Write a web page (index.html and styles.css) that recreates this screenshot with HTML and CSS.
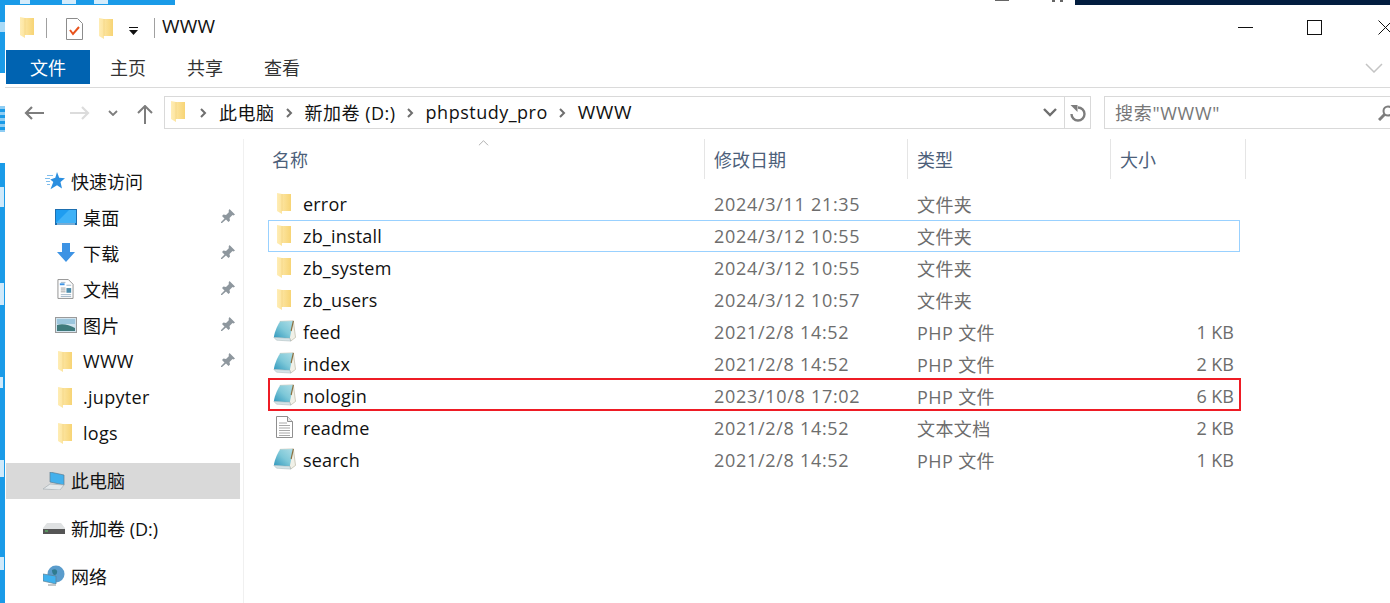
FILE: index.html
```html
<!DOCTYPE html>
<html lang="zh-CN">
<head>
<meta charset="utf-8">
<title>WWW</title>
<link rel="stylesheet" href="styles.css">
</head>
<body>
<svg class="defs" width="0" height="0" aria-hidden="true">
  <defs>
    <linearGradient id="fg" x1="0" y1="0" x2="1" y2="0"><stop offset="0" stop-color="#ffedb5"/><stop offset="1" stop-color="#f7d475"/></linearGradient>
    <linearGradient id="pg" x1="1" y1="0" x2="0" y2="1"><stop offset="0" stop-color="#aedde6"/><stop offset=".5" stop-color="#7ec8d8"/><stop offset="1" stop-color="#2f97bd"/></linearGradient>
    <symbol id="folder" viewBox="0 0 14 21" preserveAspectRatio="none">
      <path d="M0 0l5 1h9v17H5v3l-5-3z" fill="url(#fg)"/>
      <path d="M5 1v17" stroke="#f2d27c" stroke-width=".6" fill="none"/>
    </symbol>
    <symbol id="php" viewBox="0 0 26 24" preserveAspectRatio="none">
      <path d="M8 1.500L23 1l2.500 18-5.500 4-1-3z" fill="#f1f1e8" stroke="#a9a58f" stroke-width=".6"/>
      <path d="M8 1.500L23 1l-4 19L1 19c0-3 3-12 7-17.500z" fill="url(#pg)"/>
      <path d="M23 1l-2.500 11" stroke="#8a6f3e" stroke-width="1.300" fill="none"/>
      <path d="M1 19l18 1 1 3-16-1z" fill="#d5e4e8" stroke="#a0b0b4" stroke-width=".5"/>
    </symbol>
    <symbol id="txt" viewBox="0 0 17 22" preserveAspectRatio="none">
      <path d="M.5.500h11l5 5v16H.5z" fill="#fff" stroke="#8f8f8f"/>
      <path d="M11.500.500v5h5" fill="#e8e8e8" stroke="#8f8f8f"/>
      <path d="M3 7h8M3 9.500h11M3 12h11M3 14.500h11M3 17h11M3 19.500h11" stroke="#a8a8a8" fill="none"/>
    </symbol>
    <symbol id="pin" viewBox="0 0 16 16">
      <path d="M9.500 1l5.500 5.500-1.500 1-1-.5-3 3 .5 2.500-1.500 1.500-2.500-2.500L2 15l-1 0 0-1 3.500-3.500L2 8l1.500-1.500L6 7l3-3-.500-1z" fill="#8e979e"/>
    </symbol>
  </defs>
</svg>

<div class="top-strip">
  <div class="top-blue"><span class="tb b1"></span><span class="tb b2"></span><span class="tb b3"></span></div>
  <div class="top-white"><span class="tw w1"></span><span class="tw w2"></span><span class="tw w3"></span></div>
  <div class="top-navy"></div>
</div>

<div class="stage">
  <div class="left-strip">
    <span class="chip c0"></span><span class="chip gapw g1"></span><span class="chip stripes"></span><span class="chip gapw g2"></span>
    <span class="chip c1"></span><span class="chip c2"></span><span class="chip c3"></span><span class="chip c4"></span><span class="chip c5"></span>
  </div>

  <main class="window">
    <header class="titlebar">
      <svg class="qa-folder"><use href="#folder"/></svg>
      <span class="qa-sep"></span>
      <svg class="qa-check" viewBox="0 0 17 22"><path d="M.5.500h11l5 5v16H.5z" fill="#fff" stroke="#8c8c8c"/><path d="M4 12l3 4 6-7" fill="none" stroke="#e8521c" stroke-width="2"/></svg>
      <svg class="qa-folder2"><use href="#folder"/></svg>
      <svg class="qa-drop" viewBox="0 0 9 8"><path d="M0 0h9v1H0zM0 3h9L4.500 8z" fill="#111"/></svg>
      <span class="qa-sep sep2"></span>
      <span class="title">WWW</span>
      <div class="winbtns">
        <span class="win-min"></span>
        <span class="win-max"></span>
        <svg class="win-close" viewBox="0 0 15 15"><path d="M.5.500l14 14M14.500.500l-14 14" stroke="#111" fill="none"/></svg>
      </div>
    </header>

    <nav class="ribbon">
      <span class="tab active">文件</span>
      <span class="tab t1">主页</span>
      <span class="tab t2">共享</span>
      <span class="tab t3">查看</span>
      <svg class="ribbon-chev" viewBox="0 0 18 10"><path d="M1 1l8 8 8-8" fill="none" stroke="#c4c4c4" stroke-width="1.500"/></svg>
    </nav>

    <div class="addressrow">
      <svg class="nav-btn back" viewBox="0 0 20 14"><path d="M8 1L2 7l6 6M2 7h18" fill="none" stroke="#7d7d7d" stroke-width="2.200"/></svg>
      <svg class="nav-btn fwd" viewBox="0 0 20 14"><path d="M12 1l6 6-6 6M18 7H0" fill="none" stroke="#dcdcdc" stroke-width="2.200"/></svg>
      <svg class="nav-drop" viewBox="0 0 10 6"><path d="M1 1l4 4 4-4" fill="none" stroke="#7d7d7d" stroke-width="1.800"/></svg>
      <svg class="nav-up" viewBox="0 0 16 19"><path d="M1 8l7-7 7 7M8 1v18" fill="none" stroke="#7d7d7d" stroke-width="2"/></svg>
      <div class="addressbar">
        <svg class="ab-folder"><use href="#folder"/></svg>
        <svg class="crumb-chev" viewBox="0 0 7 10"><path d="M1 1l4 4-4 4" fill="none" stroke="#6e6e6e" stroke-width="2"/></svg>
        <span class="crumb">此电脑</span>
        <svg class="crumb-chev" viewBox="0 0 7 10"><path d="M1 1l4 4-4 4" fill="none" stroke="#6e6e6e" stroke-width="2"/></svg>
        <span class="crumb">新加卷 (D:)</span>
        <svg class="crumb-chev" viewBox="0 0 7 10"><path d="M1 1l4 4-4 4" fill="none" stroke="#6e6e6e" stroke-width="2"/></svg>
        <span class="crumb">phpstudy_pro</span>
        <svg class="crumb-chev" viewBox="0 0 7 10"><path d="M1 1l4 4-4 4" fill="none" stroke="#6e6e6e" stroke-width="2"/></svg>
        <span class="crumb crumb-www">WWW</span>
        <svg class="ab-drop" viewBox="0 0 14 9"><path d="M1 1l6 6 6-6" fill="none" stroke="#6e6e6e" stroke-width="2.400"/></svg>
        <span class="ab-refresh">
          <svg viewBox="0 0 18 18"><path d="M9 3.500A6.500 6.500 0 1 1 2.500 10" fill="none" stroke="#7d7d7d" stroke-width="2.400"/><path d="M1.500 1h7v7z" fill="#7d7d7d"/></svg>
        </span>
      </div>
      <div class="searchbox">
        <span class="search-text">搜索"WWW"</span>
        <svg class="search-icon" viewBox="0 0 16 16"><circle cx="10" cy="6" r="4.500" fill="none" stroke="#7d7d7d" stroke-width="2"/><path d="M7 9l-6 6" stroke="#7d7d7d" stroke-width="3"/></svg>
      </div>
    </div>

    <div class="content">
      <aside class="sidebar">
        <div class="side-row head">
          <svg class="side-ico star" viewBox="0 0 20 18"><path d="M12 0l2.200 5.800 5.800.4-4.500 3.800 1.500 6.500-5-3.300-6.500 4 2.800-7.200-3-2.600 5-1.700z" fill="#2b8fe0"/><path d="M2 3.500h6M0 6.500h5M1 9.500h4M2 12.500h3" stroke="#7fbdec"/></svg>
          <span>快速访问</span>
        </div>
        <div class="side-row sub">
          <svg class="side-ico desk" viewBox="0 0 22 16"><rect width="22" height="16" fill="#1d6fb0"/><path d="M1 1h20v13H1z" fill="#1f9df0"/><path d="M1 14L14 1h7v13z" fill="#3fb2f7"/><path d="M2 15h18" stroke="#cfe9fa"/></svg>
          <span>桌面</span><svg class="pin"><use href="#pin"/></svg>
        </div>
        <div class="side-row sub">
          <svg class="side-ico down" viewBox="0 0 18 20"><path d="M5 0h8v9h5l-9 10L0 9h5z" fill="#3d93e4"/></svg>
          <span>下载</span><svg class="pin"><use href="#pin"/></svg>
        </div>
        <div class="side-row sub">
          <svg class="side-ico doc" viewBox="0 0 18 22"><path d="M1 1h11l5 5v15H1z" fill="#fff" stroke="#8f8f8f"/><path d="M4 4h5M10 7h5M4 17h11M4 19h11" stroke="#9fb4c6"/><path d="M10 10h5v5h-5z" fill="#4b8cab"/><path d="M4 10h5M4 12h5M4 14h5" stroke="#a0a0a0"/><path d="M3 6h5" stroke="#3d93e4" stroke-width="2"/></svg>
          <span>文档</span><svg class="pin"><use href="#pin"/></svg>
        </div>
        <div class="side-row sub">
          <svg class="side-ico pic" viewBox="0 0 22 16"><rect x=".5" y=".5" width="21" height="15" fill="#d0e3ee" stroke="#9a9a9a"/><path d="M2 2h18v5H2z" fill="#9cc6dd"/><path d="M2 8c6-2 12 0 18 3v3H2z" fill="#3f7a7c"/></svg>
          <span>图片</span><svg class="pin"><use href="#pin"/></svg>
        </div>
        <div class="side-row sub">
          <svg class="side-ico fold"><use href="#folder"/></svg>
          <span>WWW</span><svg class="pin"><use href="#pin"/></svg>
        </div>
        <div class="side-row sub">
          <svg class="side-ico fold"><use href="#folder"/></svg>
          <span>.jupyter</span>
        </div>
        <div class="side-row sub">
          <svg class="side-ico fold"><use href="#folder"/></svg>
          <span>logs</span>
        </div>
        <div class="side-row head selected gap-a">
          <svg class="side-ico pc" viewBox="0 0 22 18"><path d="M7 0l14 3v10L7 10z" fill="#43b0ec" stroke="#5e7f93" stroke-width=".7"/><path d="M0 17l7-5 14 1-4 5z" fill="#e4e8ea" stroke="#a8b0b4" stroke-width=".7"/></svg>
          <span>此电脑</span>
        </div>
        <div class="side-row head gap-b">
          <svg class="side-ico drive" viewBox="0 0 22 11"><path d="M4 0h14l4 5v5H0V5z" fill="#dfe1e2"/><path d="M0 6h22v5H0z" fill="#555"/><path d="M2 8h3" stroke="#5fd46a"/></svg>
          <span>新加卷 (D:)</span>
        </div>
        <div class="side-row head gap-c">
          <svg class="side-ico net" viewBox="0 0 22 22"><circle cx="13" cy="9" r="8.500" fill="#5a9ccc"/><path d="M9 5c3-2 6 0 5 3s-5 3-5-3z" fill="#2f7b8f"/><path d="M0 9l13 2v8L0 16z" fill="#3fb1ee" stroke="#60808f" stroke-width=".7"/><path d="M5 19h8v2H5z" fill="#c4c8ca"/></svg>
          <span>网络</span>
        </div>
      </aside>

      <section class="list">
        <svg class="sort-arrow" viewBox="0 0 12 6"><path d="M1 5.500l5-5 5 5" fill="none" stroke="#a8a8a8"/></svg>
        <div class="row-head">
          <span class="col-name">名称</span>
          <span class="col-date">修改日期</span>
          <span class="col-type">类型</span>
          <span class="col-size">大小</span>
        </div>
        <div class="rows">
          <div class="row"><span class="cell-name"><svg class="fico"><use href="#folder"/></svg>error</span><span class="cell-date">2024/3/11 21:35</span><span class="cell-type">文件夹</span><span class="cell-size"></span></div>
          <div class="row focused"><span class="cell-name"><svg class="fico"><use href="#folder"/></svg>zb_install</span><span class="cell-date">2024/3/12 10:55</span><span class="cell-type">文件夹</span><span class="cell-size"></span></div>
          <div class="row"><span class="cell-name"><svg class="fico"><use href="#folder"/></svg>zb_system</span><span class="cell-date">2024/3/12 10:55</span><span class="cell-type">文件夹</span><span class="cell-size"></span></div>
          <div class="row"><span class="cell-name"><svg class="fico"><use href="#folder"/></svg>zb_users</span><span class="cell-date">2024/3/12 10:57</span><span class="cell-type">文件夹</span><span class="cell-size"></span></div>
          <div class="row"><span class="cell-name"><svg class="pico"><use href="#php"/></svg>feed</span><span class="cell-date">2021/2/8 14:52</span><span class="cell-type">PHP 文件</span><span class="cell-size">1 KB</span></div>
          <div class="row"><span class="cell-name"><svg class="pico"><use href="#php"/></svg>index</span><span class="cell-date">2021/2/8 14:52</span><span class="cell-type">PHP 文件</span><span class="cell-size">2 KB</span></div>
          <div class="row marked"><span class="cell-name"><svg class="pico"><use href="#php"/></svg>nologin</span><span class="cell-date">2023/10/8 17:02</span><span class="cell-type">PHP 文件</span><span class="cell-size">6 KB</span></div>
          <div class="row"><span class="cell-name"><svg class="tico"><use href="#txt"/></svg>readme</span><span class="cell-date">2021/2/8 14:52</span><span class="cell-type">文本文档</span><span class="cell-size">2 KB</span></div>
          <div class="row"><span class="cell-name"><svg class="pico"><use href="#php"/></svg>search</span><span class="cell-date">2021/2/8 14:52</span><span class="cell-type">PHP 文件</span><span class="cell-size">1 KB</span></div>
        </div>
      </section>
    </div>
  </main>
</div>
</body>
</html>
```
FILE: styles.css
```css
* { box-sizing: border-box; }
html, body { margin: 0; height: 100%; overflow: hidden; background: #fff; }
body { font-family: "Open Sans", "Noto Sans CJK SC", sans-serif; font-size: 18px; color: #111; }
.defs { position: absolute; }

.top-strip { display: flex; height: 5px; position: relative; }
.top-blue { width: 175px; background: #1a9be8; position: relative; }
.top-white { flex: 1; background: #fff; position: relative; }
.top-navy { width: 315px; background: #021d3f; }
.tb { position: absolute; top: 0; height: 4px; background: #d5ecfb; }
.b1 { left: 20px; width: 10px; }
.b2 { left: 62px; width: 14px; }
.b3 { left: 94px; width: 14px; }
.tw { position: absolute; top: 0; height: 1px; background: #666; }
.w1 { left: 820px; width: 14px; }
.w2 { left: 877px; width: 3px; height: 2px; }
.w3 { left: 885px; width: 3px; height: 2px; }

.stage { display: flex; height: 598px; }
.left-strip { position: relative; width: 5px; background: #1a9be8; flex: none; }
.chip { position: absolute; left: 0; width: 5px; background: #cfe9fa; }
.c0 { top: 17px; height: 10px; background: #a9daf7; }
.gapw { background: #fff; }
.g1 { top: 68px; height: 33px; }
.stripes { top: 101px; height: 26px; background: repeating-linear-gradient(#8fcdf3 0 3px, #1a9be8 3px 6px); }
.g2 { top: 127px; height: 31px; }
.c1 { top: 182px; height: 20px; width: 4px; }
.c2 { top: 278px; height: 22px; width: 4px; }
.c3 { top: 372px; height: 11px; width: 3px; }
.c4 { top: 455px; height: 17px; width: 4px; }
.c5 { top: 552px; height: 13px; width: 4px; }

.window { flex: 1; display: flex; flex-direction: column; min-width: 0; background: #fff; overflow: hidden; }

.titlebar { height: 45px; display: flex; align-items: center; padding-left: 15px; }
.qa-folder { width: 14px; height: 21px; margin-right: 12px; flex: none; }
.qa-sep { width: 1px; height: 20px; background: #a0a0a0; margin-right: 19px; flex: none; }
.qa-check { width: 17px; height: 22px; margin-right: 16px; flex: none; margin-top: 2px; }
.qa-folder2 { width: 14px; height: 21px; margin-right: 16px; flex: none; margin-top: 2px; }
.qa-drop { width: 9px; height: 8px; margin-right: 16px; margin-top: 6px; flex: none; }
.sep2 { margin-right: 7px; }
.title { font-size: 19px; margin-bottom: 3px; letter-spacing: .2px; }
.winbtns { margin-left: auto; display: flex; align-items: center; height: 100%; flex: none; }
.win-min { width: 15px; height: 1px; background: #111; }
.win-max { width: 15px; height: 15px; border: 1px solid #111; margin-left: 54px; }
.win-close { width: 15px; height: 15px; margin-left: 56px; margin-right: -3px; flex: none; }

.ribbon { height: 38px; display: flex; align-items: flex-start; border-bottom: 1px solid #dadada; padding-left: 1px; }
.tab { font-size: 18px; line-height: 37px; height: 34px; color: #333; flex: none; }
.tab.active { width: 84px; text-align: center; background: #0063b1; color: #fff; }
.t1 { margin-left: 20px; }
.t2 { margin-left: 41px; }
.t3 { margin-left: 41px; }
.ribbon-chev { width: 18px; height: 10px; margin-left: auto; margin-right: 7px; margin-top: 13px; }

.addressrow { height: 51px; padding-top: 8px; display: flex; align-items: flex-start; }
.nav-btn { width: 20px; height: 14px; margin-top: 10px; flex: none; }
.back { margin-left: 19px; }
.fwd { margin-left: 26px; }
.nav-drop { width: 10px; height: 6px; margin: 14px 0 0 18px; flex: none; }
.nav-up { width: 16px; height: 19px; margin: 9px 0 0 19px; flex: none; }
.addressbar { width: 927px; height: 33px; margin-left: 11px; border: 1px solid #d9d9d9; display: flex; align-items: center; font-size: 18px; flex: none; }
.ab-folder { width: 14px; height: 21px; margin-left: 6px; margin-right: 4px; margin-top: -2px; flex: none; }
.crumb-chev { width: 7px; height: 10px; margin: 0 12px 0 11px; flex: none; }
.crumb { white-space: nowrap; color: #111; letter-spacing: .5px; margin-bottom: 2px; }
.crumb-www { font-size: 19px; letter-spacing: .5px; }
.ab-drop { width: 14px; height: 9px; margin-left: auto; margin-right: 7px; flex: none; }
.ab-refresh { width: 26px; height: 100%; border-left: 1px solid #d9d9d9; display: flex; align-items: center; justify-content: center; flex: none; }
.ab-refresh svg { width: 18px; height: 18px; }
.searchbox { flex: none; width: 300px; height: 33px; margin-left: 13px; border: 1px solid #d9d9d9; display: flex; align-items: center; padding-left: 10px; position: relative; }
.search-text { font-size: 18px; color: #777; letter-spacing: .7px; margin-bottom: 2px; }
.search-icon { width: 16px; height: 16px; position: absolute; left: 273px; top: 8px; }

.content { flex: 1; display: flex; min-height: 0; }
.sidebar { width: 239px; flex: none; border-right: 1px solid #f0f0f0; padding-top: 24px; }
.side-row { height: 36px; display: flex; align-items: center; position: relative; color: #111; font-size: 18px; }
.head { padding-left: 38px; }
.sub { padding-left: 50px; }
.head span { margin-left: 1px; }
.sub span { position: absolute; left: 78px; letter-spacing: .3px; }
.side-ico { flex: none; }
.star { width: 20px; height: 18px; margin-right: 5px; margin-left: 2px; }
.desk { width: 22px; height: 16px; }
.down { width: 18px; height: 20px; margin-left: 2px; }
.doc { width: 17px; height: 22px; margin-left: 2px; }
.pic { width: 22px; height: 16px; }
.fold { width: 14px; height: 21px; margin-left: 3px; }
.pin { position: absolute; left: 215px; width: 16px; height: 16px; top: 9px; }
.selected { background: #d9d9d9; width: 234px; margin-left: 1px; padding-left: 37px; }
.selected span { margin-bottom: 2px; }
.pc { width: 22px; height: 18px; margin-right: 5px; }
.drive { width: 22px; height: 11px; margin-right: 5px; }
.net { width: 22px; height: 22px; margin-right: 5px; }
.gap-a { margin-top: 12px; }
.gap-b { margin-top: 11px; }
.gap-c { margin-top: 12px; }

.list { flex: 1; position: relative; min-width: 0; }
.sort-arrow { position: absolute; left: 234px; top: 1px; width: 11px; height: 6px; }
.row-head { display: flex; height: 40px; color: #4c607a; font-size: 18px; }
.row-head span { height: 100%; display: flex; align-items: center; border-right: 1px solid #e5e5e5; flex: none; }
.col-name { width: 461px; padding-left: 28px; }
.col-date { width: 203px; padding-left: 9px; }
.col-type { width: 203px; padding-left: 9px; }
.col-size { width: 135px; padding-left: 9px; }
.rows { padding-top: 9px; padding-left: 24px; }
.row { display: flex; height: 32px; align-items: center; width: 972px; }
.cell-name { width: 436px; display: flex; align-items: center; flex: none; white-space: nowrap; letter-spacing: .2px; }
.cell-date { width: 203px; color: #6d6d6d; flex: none; padding-left: 10px; letter-spacing: .7px; }
.cell-type { width: 203px; color: #6d6d6d; flex: none; padding-left: 10px; letter-spacing: .4px; }
.cell-size { width: 124px; color: #6d6d6d; text-align: right; flex: none; }
.focused { border: 1px solid #99d1ff; }
.marked { border: 2px solid #ee1c25; height: 33px; margin-top: -2px; margin-bottom: 1px; width: 973px; padding-top: 3px; }
.fico { width: 14px; height: 21px; margin: 0 12px 2px 9px; flex: none; }
.pico { width: 23px; height: 22px; margin: 0 7px 2px 5px; flex: none; }
.tico { width: 17px; height: 22px; margin: 0 10px 2px 8px; flex: none; }
.focused .cell-name { margin-left: -1px; }
.marked .cell-name { margin-left: -2px; }
```
